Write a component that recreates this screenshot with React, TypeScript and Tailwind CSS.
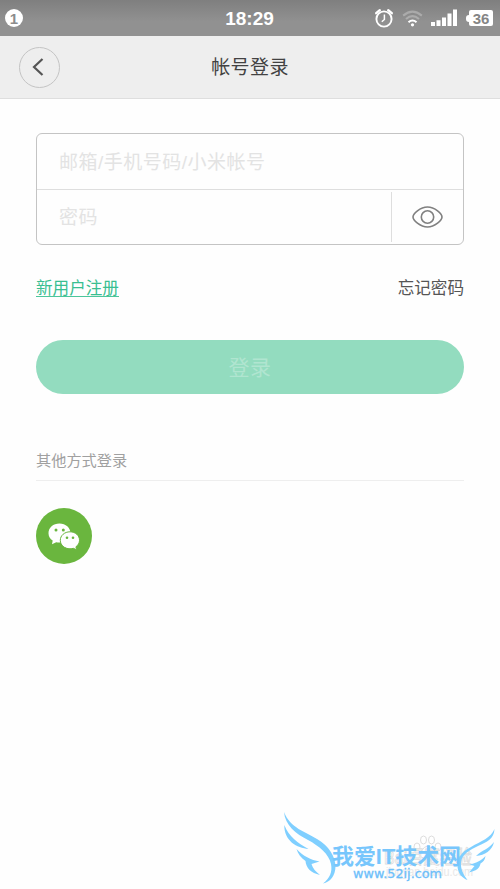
import React from 'react';

interface PlaceholderProps {
  text: string;
}

const StatusBar: React.FC = () => (
  <div className="flex h-9 shrink-0 items-center bg-linear-to-b from-[#7f7f7f] to-[#919191] to-60% text-white">
    <div className="flex flex-1 items-center pl-[5px]">
      <span className="flex h-[18px] w-[18px] items-center justify-center rounded-full bg-white text-[15px] leading-none font-bold text-[#8c8c8c]">
        1
      </span>
    </div>
    <span className="pt-px pl-px text-[19px] leading-none font-bold">18:29</span>
    <div className="flex flex-1 items-center justify-end pr-[7px]">
      {/* Alarm */}
      <svg className="h-5 w-5" viewBox="0 0 20 20" fill="none" stroke="white" strokeWidth="1.9">
        <circle cx="10" cy="11" r="7.600" />
        <path d="M2.200 5.200 5.800 2.200M17.800 5.200 14.200 2.200" strokeWidth="2.400" strokeLinecap="round" />
        <path d="M10.400 6.500v5L7.800 13.800" strokeWidth="1.500" />
      </svg>
      {/* Wifi */}
      <svg className="ml-2 h-5 w-[21px]" viewBox="0 0 22 20" fill="none" stroke="white" strokeWidth="2.200">
        <path d="M1.200 7.500q9.800-8.300 19.600 0" opacity=".28" />
        <path d="M4.200 11q6.800-5.800 13.600 0" opacity=".28" />
        <path d="M6.800 14.400q4.200-3.600 8.400 0" />
        <circle cx="11" cy="17.200" r="1.700" fill="white" stroke="none" />
      </svg>
      {/* Signal */}
      <svg className="ml-2 h-5 w-[27px]" viewBox="0 0 27 20" fill="white">
        <path d="M0 14h4v4H0zM5.500 12.300h4V18h-4zM11 9.500h4V18h-4zM16.500 5.500h4V18h-4zM22 1.500h4V18h-4z" />
      </svg>
      {/* Battery */}
      <div className="ml-[8px] flex items-center">
        <span className="h-[7px] w-[3px] rounded-l-sm bg-white" />
        <span className="flex h-4 w-6 items-center justify-center rounded-[2px] bg-white text-[15px] leading-none font-bold text-[#858585]">
          36
        </span>
      </div>
    </div>
  </div>
);

const Placeholder: React.FC<PlaceholderProps> = ({ text }) => (
  <span className="flex-1 pt-px pl-[22px] text-[19px] leading-none tracking-[0.5px] text-[#e3e3e3]">
    {text}
  </span>
);

const SiteBadge: React.FC = () => (
  <svg
    className="absolute right-0 bottom-0 h-[89px] w-[230px]"
    viewBox="270 800 230 89"
    fontFamily="'Liberation Sans', 'Noto Sans CJK SC', sans-serif"
  >
    {/* Faint paw mark underneath */}
    <g fill="white" stroke="#dddddd" strokeWidth="1">
      <ellipse cx="417" cy="847" rx="3" ry="4" />
      <ellipse cx="423.500" cy="840" rx="3" ry="4" />
      <ellipse cx="431.500" cy="840" rx="3" ry="4" />
      <ellipse cx="438" cy="847" rx="3" ry="4" />
      <path d="M427.500 846q3 0 7 7 1 5-4 5h-7q-5-1-3-6 4-6 7-6z" />
    </g>
    <text x="384" y="864" fontSize="19" fill="white" stroke="#dddddd" strokeWidth=".8" textLength="88" lengthAdjust="spacingAndGlyphs">
      Bai百度经验
    </text>
    <text x="386" y="876" fontSize="12" fill="#e8e8e8" textLength="87" lengthAdjust="spacingAndGlyphs">
      jingyan.baidu.com
    </text>
    <g fill="#7fcfff">
      {/* Left wing */}
      <path d="M284 812C290 828 306 832 317 839C329 846 335 856 335.500 866C335.500 876 330 882 323 883.500C330 878 332.500 872 331 864C329 854 319 846 308 840C296 834 285 825 284 812Z" />
      <path d="M284.300 825C289 837 298 843 308.500 849C297 848 284 841 284.300 825Z" />
      <path d="M296.500 849C303 856 311 860 319.500 861.500L311.500 864C312.500 868 316 872 320 875C311 873 306 868 305.500 861C301 858 298 854 296.500 849Z" />
      {/* Right wing */}
      <path d="M494.500 829C491 838 481 841 471 847C461 852 456.500 859 457.500 867C458.500 874 462 878 467.500 880C463 874 460.500 869 461 862C462 854 470 850 478 846C487 842 494 839 494.500 829Z" />
      <path d="M494 842C489 849 482 850 476 856C485 855 492 851 494 842Z" />
      <path d="M485.500 856C481 861 476 863 469.500 864.500L474.500 866L469 872.500C476 871 480 868 480.500 863.500C483 862 485 860 485.500 856Z" />
    </g>
    <text
      x="332"
      y="864"
      fontSize="22"
      fontWeight="700"
      fill="#77c6fc"
      textLength="129"
      lengthAdjust="spacingAndGlyphs"
    >
      我爱IT技术网
    </text>
    <text
      x="353"
      y="878"
      fontFamily="'DejaVu Sans', sans-serif"
      fontSize="11.500"
      fill="#6dbffa"
      stroke="#6dbffa"
      strokeWidth=".3"
      textLength="89"
      lengthAdjust="spacingAndGlyphs"
    >
      www.52ij.com
    </text>
  </svg>
);

export default function App() {
  return (
    <div className="relative flex h-[889px] w-[500px] flex-col overflow-hidden bg-[#fefefe] font-['Liberation_Sans','Noto_Sans_CJK_SC',sans-serif]">
      <StatusBar />

      {/* Header */}
      <header className="flex h-[63px] shrink-0 items-center border-b border-[#dedede] bg-[#eeeeee] px-[19px]">
        <button className="flex h-[41px] w-[41px] items-center justify-center rounded-full border border-[#c4c4c4] pr-[3px]">
          <svg className="h-[18px] w-3" viewBox="0 0 12 18" fill="none" stroke="#555555" strokeWidth="2.200">
            <path d="M10.500 1 2 9l8.500 8" />
          </svg>
        </button>
        <h1 className="flex-1 pr-[41px] text-center text-[19px] leading-none tracking-[0.4px] text-[#424242]">
          帐号登录
        </h1>
      </header>

      <main className="flex flex-col px-9 pt-[34px]">
        {/* Account and password */}
        <div className="flex h-28 flex-col rounded-md border border-[#c4c4c4]">
          <div className="flex h-14 items-center border-b border-[#dedede]">
            <Placeholder text="邮箱/手机号码/小米帐号" />
          </div>
          <div className="flex flex-1 items-center">
            <Placeholder text="密码" />
            <div className="flex h-[50px] w-[72px] items-center justify-center border-l border-[#dedede]">
              <svg className="h-[22px] w-[31px]" viewBox="0 0 31 22" fill="none" stroke="#808080" strokeWidth="1.600">
                <path d="M1 11C1 8 8 1 15.500 1S30 8 30 11 23 21 15.500 21 1 14 1 11Z" />
                <circle cx="15.500" cy="11" r="6.200" />
              </svg>
            </div>
          </div>
        </div>

        <div className="mt-8 flex h-6 items-center justify-between text-[16.6px] leading-none">
          <a className="border-b border-[#4cc69b] leading-[15px] text-[#39bf91]">新用户注册</a>
          <a className="text-[#555555]">忘记密码</a>
        </div>

        <button className="mt-[39px] h-[54px] rounded-full bg-[#93dcbf] pt-px text-[21px] tracking-[0.6px] text-[#b0e5d0]">
          登录
        </button>

        {/* Other sign-in options */}
        <h2 className="mt-[55px] h-8 border-b border-[#eeeeee] text-[15.2px] leading-6 text-[#a0a0a0]">
          其他方式登录
        </h2>
        <button className="mt-[27px] flex h-14 w-14 items-center justify-center rounded-full bg-[#6ab63e]">
          <svg className="h-[27px] w-8" viewBox="0 0 32 27">
            <path
              d="M11.500 .5C5.200 .5 .5 4.700 .5 10.200c0 3.200 1.600 5.700 4.200 7.400L4 21.200l4.200-2c1 .3 2.200.4 3.300.4 6.200 0 11-4.100 11-9.400S17.700 .5 11.500 .5Z"
              fill="white"
            />
            <path
              d="M22 8.800c-5.400 0-9.700 3.700-9.700 8.500s4.300 8.500 9.700 8.500c1.200 0 2.300-.2 3.300-.5l3.400 1.500-.8-3c2.200-1.500 3.600-3.900 3.600-6.500 0-4.800-4.100-8.500-9.500-8.500Z"
              fill="white"
              stroke="#6ab63e"
            />
            <g fill="#6ab63e">
              <circle cx="8" cy="7" r="1.500" />
              <circle cx="15.300" cy="7" r="1.500" />
              <circle cx="19" cy="14.800" r="1.300" />
              <circle cx="25" cy="14.800" r="1.300" />
            </g>
          </svg>
        </button>
      </main>

      <SiteBadge />
    </div>
  );
}
